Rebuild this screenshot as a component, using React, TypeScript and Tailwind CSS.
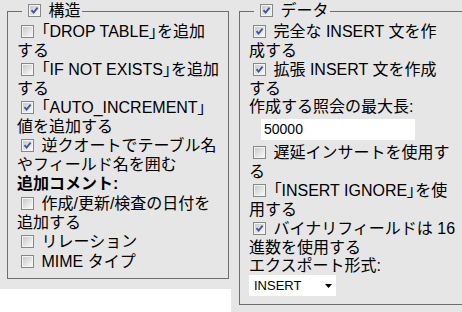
import type { ReactNode } from 'react';

const font = "font-['Liberation_Sans','Noto_Sans_CJK_JP',sans-serif] text-[16px] text-black";

function Box({ checked }: { checked?: boolean }) {
  return (
    <span className="relative inline-block align-middle -mt-[2px] ml-[4px] mr-[3px] h-[13px] w-[13px] border border-[#878787] bg-[#f4f4f4]">
      <span className="absolute inset-[1px] bg-gradient-to-br from-[#cacaca] to-[#f8f8f8]" />
      {checked && (
        <svg className="absolute left-0 top-0" width="11" height="11" viewBox="0 0 11 11">
          <path d="M2.5 5.2 L4.6 7.6 L8.6 2.6" fill="none" stroke="#3f5497" strokeWidth="1.8" />
        </svg>
      )}
    </span>
  );
}

// narrow brackets, like the proportional font in the picture
function Q({ children }: { children: ReactNode }) {
  return <span className="[font-feature-settings:'palt']">{children}</span>;
}

function Row({ checked, first, second }: { checked?: boolean; first: ReactNode; second?: ReactNode }) {
  return (
    <div>
      <div className="h-[20px] leading-[20px] whitespace-nowrap">
        <Box checked={checked} /> {first}
      </div>
      {second && <div className="leading-[18px] whitespace-nowrap">{second}</div>}
    </div>
  );
}

export default function App() {
  return (
    <div className={`flex items-start w-[462px] ${font}`}>
      {/* 構造 */}
      <div className="w-[231px] h-[289px] bg-[#e6e6e6]">
        <fieldset className="ml-[7px] w-[215px] border border-[#6e6e6e] px-[9px] pb-[6px]">
          <legend className="ml-[5px] px-[2px] h-[22px] leading-[22px] whitespace-nowrap">
            <Box checked /> 構造
          </legend>
          <Row first={<><Q>「</Q>DROP TABLE<Q>」</Q>を追加</>} second="する" />
          <Row first={<><Q>「</Q>IF NOT EXISTS<Q>」</Q>を追加</>} second="する" />
          <Row checked first={<><Q>「</Q>AUTO_INCREMENT<Q>」</Q></>} second="値を追加する" />
          <Row checked first="逆クオートでテーブル名" second="やフィールド名を囲む" />
          <div className="h-[20px] leading-[20px] font-bold">追加コメント:</div>
          <Row first="作成/更新/検査の日付を" second="追加する" />
          <Row first="リレーション" />
          <Row first="MIME タイプ" />
        </fieldset>
      </div>

      {/* データ */}
      <div className="w-[231px] h-[312px] bg-[#e6e6e6]">
        <fieldset className="ml-[8px] w-[214px] border border-[#6e6e6e] px-[9px] pb-[8px]">
          <legend className="ml-[5px] px-[2px] h-[22px] leading-[22px] whitespace-nowrap">
            <Box checked /> データ
          </legend>
          <Row checked first="完全な INSERT 文を作" second="成する" />
          <Row checked first="拡張 INSERT 文を作成" second="する" />
          <div className="leading-[18px] whitespace-nowrap">作成する照会の最大長:</div>
          <div className="ml-[12px] mt-[3px] mb-[3px] h-[21px] w-[154px] bg-white pl-[3px] text-[14px] leading-[21px]">
            50000
          </div>
          <Row first="遅延インサートを使用す" second="る" />
          <Row first={<><Q>「</Q>INSERT IGNORE<Q>」</Q>を使</>} second="用する" />
          <Row checked first="バイナリフィールドは 16" second="進数を使用する" />
          <div className="leading-[18px] whitespace-nowrap">エクスポート形式:</div>
          <div className="flex h-[21px] w-[87px] items-center justify-between bg-white pl-[5px] pr-[4px] text-[13px]">
            <span>INSERT</span>
            <svg width="7" height="4" viewBox="0 0 7 4">
              <path d="M0 0 H7 L3.5 4 Z" fill="#000" />
            </svg>
          </div>
        </fieldset>
      </div>
    </div>
  );
}
